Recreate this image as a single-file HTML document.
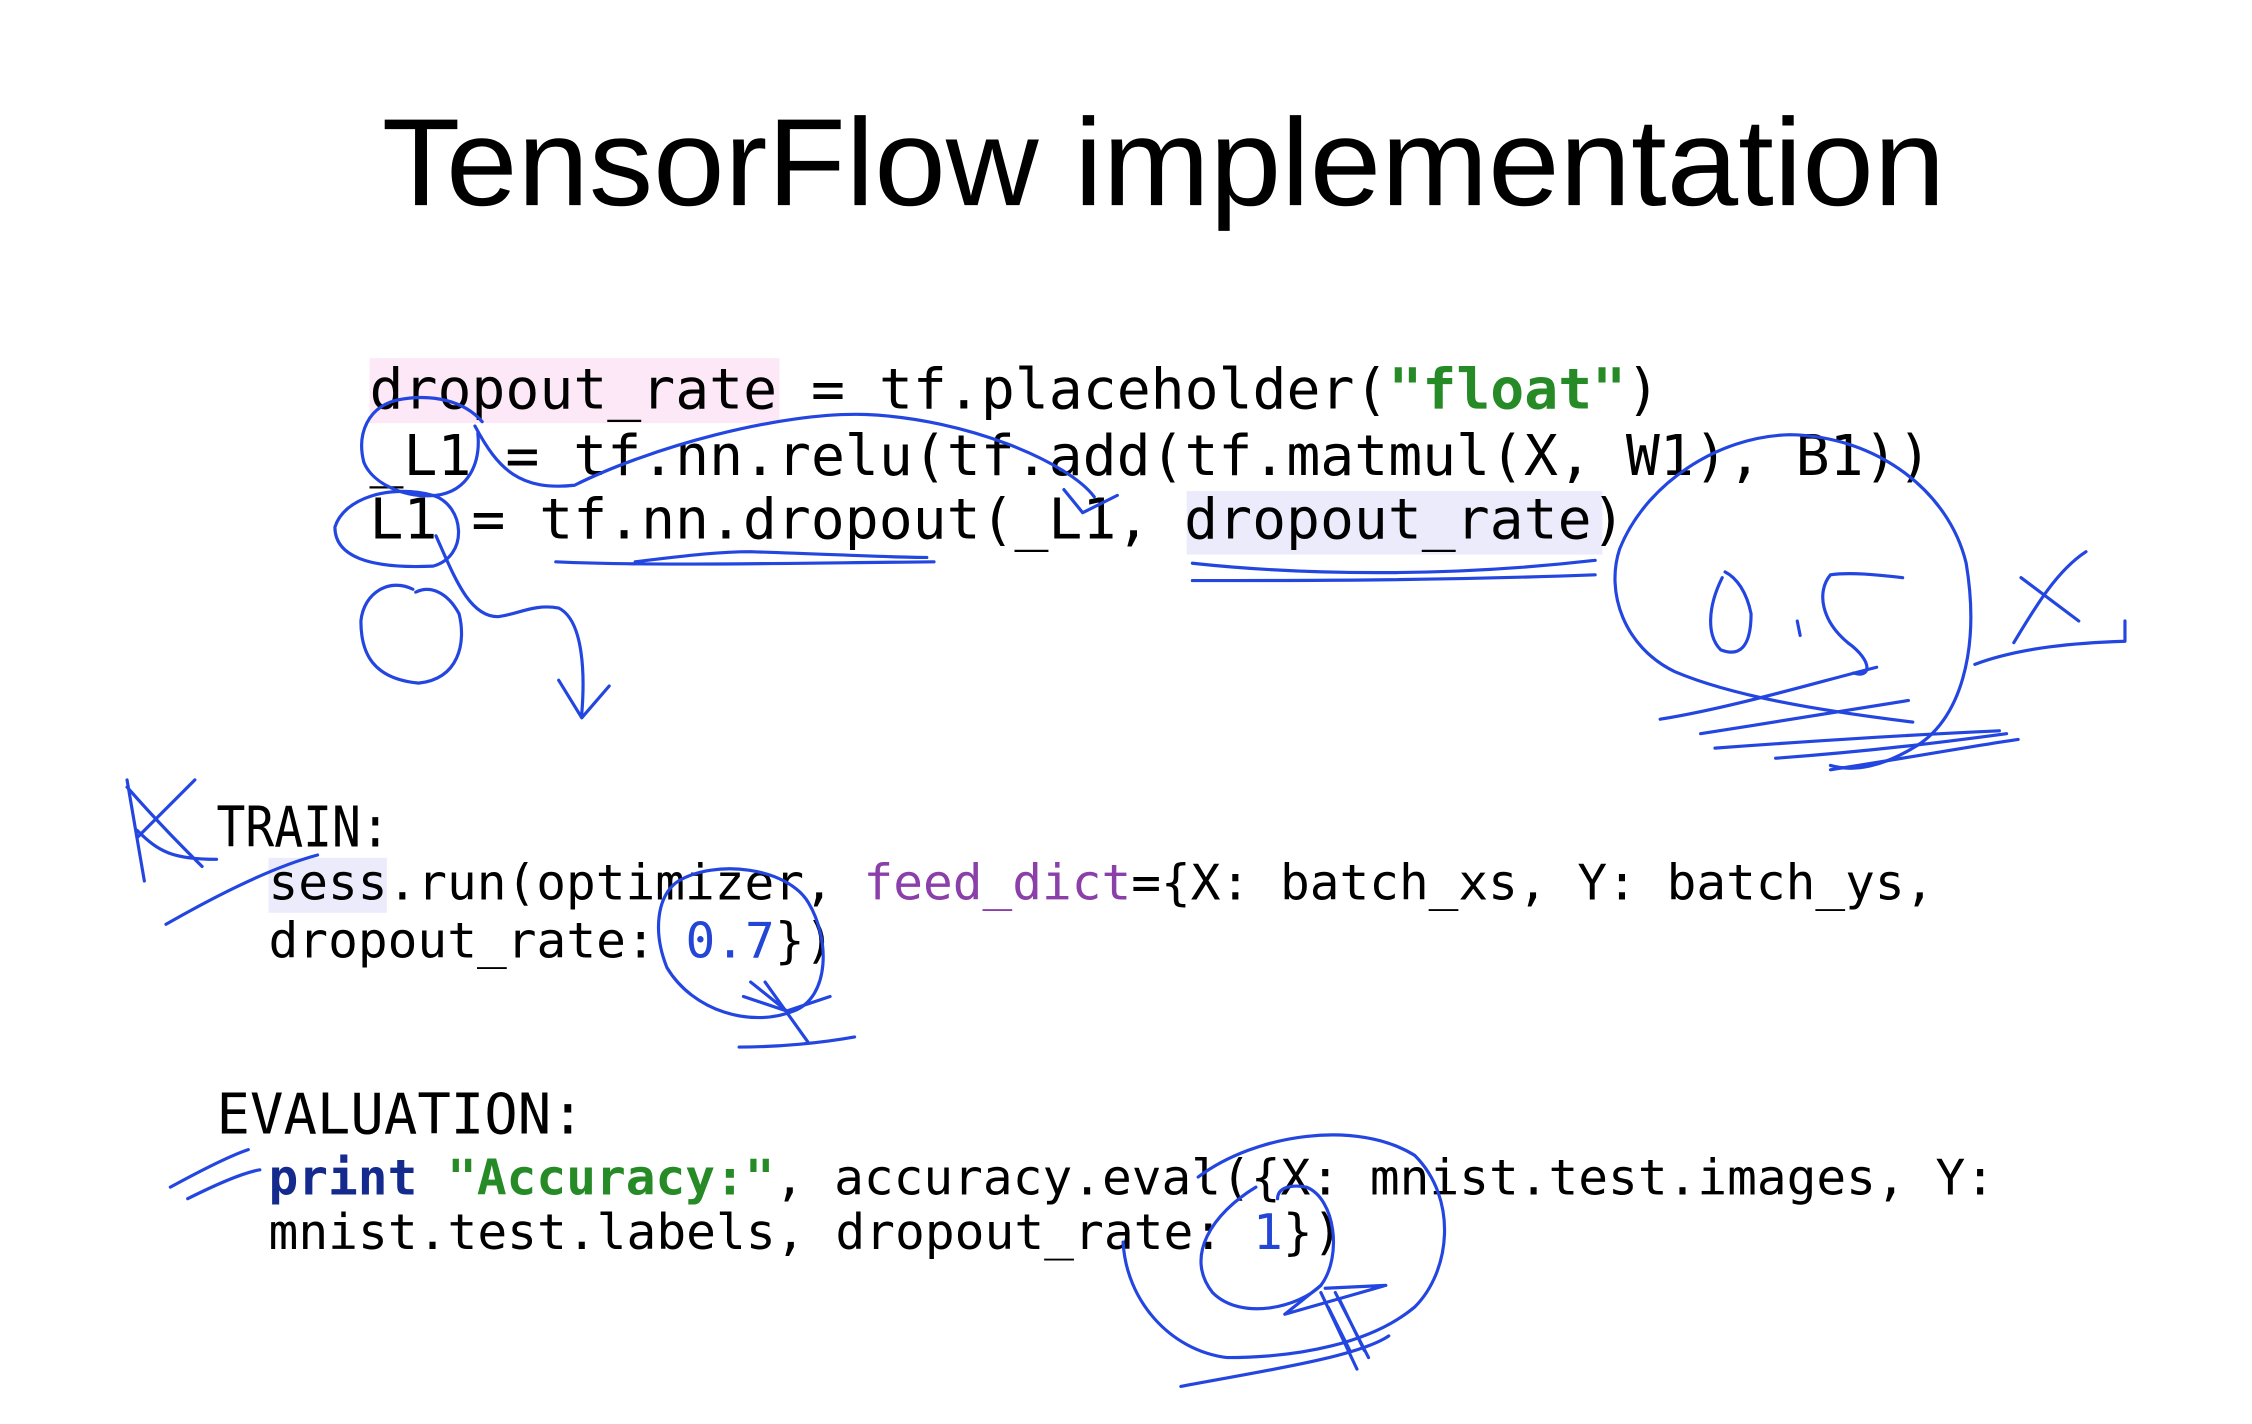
<!DOCTYPE html>
<html><head><meta charset="utf-8"><style>
html,body{margin:0;padding:0;background:#fff;width:2252px;height:1424px;overflow:hidden}
svg{display:block}
.c1{font-family:"DejaVu Sans Mono","Liberation Mono",monospace;font-size:39px;fill:#000}
.c2{font-family:"DejaVu Sans Mono","Liberation Mono",monospace;font-size:34.2px;fill:#000}
.p{fill:none;stroke:#2446e0;stroke-width:2.2;stroke-linecap:round;stroke-linejoin:round}
</style></head><body>
<svg width="2252" height="1424" viewBox="0 0 1560 986" preserveAspectRatio="none" xmlns="http://www.w3.org/2000/svg">
<text x="806" y="142" text-anchor="middle" font-family="Liberation Sans, sans-serif" font-size="86" textLength="1083" lengthAdjust="spacingAndGlyphs">TensorFlow implementation</text>

<rect x="256" y="248" width="284" height="45" fill="#fce8f6"/>
<rect x="822" y="340" width="288" height="44" fill="#ebebfb"/>
<rect x="186" y="594" width="82" height="38" fill="#ebebfb"/>

<text class="c1" x="256" y="283" textLength="894" lengthAdjust="spacingAndGlyphs">dropout_rate = tf.placeholder(<tspan fill="#268a26" font-weight="bold">"float"</tspan>)</text>
<text class="c1" x="256" y="329" textLength="1082" lengthAdjust="spacingAndGlyphs">_L1 = tf.nn.relu(tf.add(tf.matmul(X, W1), B1))</text>
<text class="c1" x="256" y="373" textLength="870" lengthAdjust="spacingAndGlyphs">L1 = tf.nn.dropout(_L1, dropout_rate)</text>

<text class="c1" x="150" y="586" textLength="120" lengthAdjust="spacingAndGlyphs">TRAIN:</text>
<text class="c2" x="186" y="623" textLength="1154" lengthAdjust="spacingAndGlyphs">sess.run(optimizer, <tspan fill="#8b3fa8">feed_dict</tspan>={X: batch_xs, Y: batch_ys,</text>
<text class="c2" x="186" y="663" textLength="392" lengthAdjust="spacingAndGlyphs">dropout_rate: <tspan fill="#2346d6">0.7</tspan>})</text>

<text class="c1" x="150" y="785" textLength="255" lengthAdjust="spacingAndGlyphs">EVALUATION:</text>
<text class="c2" x="186" y="827" textLength="1196" lengthAdjust="spacingAndGlyphs"><tspan fill="#142a8c" font-weight="bold">print</tspan> <tspan fill="#268a26" font-weight="bold">"Accuracy:"</tspan>, accuracy.eval({X: mnist.test.images, Y:</text>
<text class="c2" x="186" y="865" textLength="744" lengthAdjust="spacingAndGlyphs">mnist.test.labels, dropout_rate: <tspan fill="#2346d6">1</tspan>})</text>

<!-- annotations -->
<path class="p" d="M334 292 C322 278 300 272 275 277 C255 282 247 300 252 320 C258 335 280 345 302 343 C325 340 333 320 331 300"/>
<path class="p" d="M329 295 C345 325 360 340 398 336 C450 310 540 285 600 287 C670 290 740 320 758 344 M737 339 L750 355 L774 343"/>
<path class="p" d="M300 343 C270 335 238 345 232 365 C232 385 255 394 300 392 C325 385 322 350 300 343"/>
<path class="p" d="M302 371 C315 400 325 427 345 427 C360 425 370 418 387 421 C405 430 405 470 403 494 M387 471 L403 497 L422 475"/>
<path class="p" d="M286 408 C270 400 252 410 250 430 C250 452 258 470 290 473 C318 470 323 445 318 425 C310 410 298 405 288 410"/>
<path class="p" d="M385 389 C450 392 540 390 647 389 M440 389 C480 384 500 382 520 382 C580 384 620 386 642 386"/>
<path class="p" d="M826 390 C900 398 1000 400 1105 388 M826 402 C900 402 1000 402 1105 398"/>
<path class="p" d="M1325 500 C1260 492 1200 482 1160 465 C1125 448 1112 410 1122 380 C1140 335 1190 302 1240 301 C1300 302 1350 340 1362 390 C1372 450 1358 500 1325 518 C1305 530 1285 535 1268 530"/>
<path class="p" d="M1193 400 C1183 420 1182 440 1192 450 C1205 455 1213 448 1213 425 C1210 410 1203 400 1195 396"/>
<path class="p" d="M1245 430 L1247 440"/>
<path class="p" d="M1318 400 C1300 398 1282 396 1268 398 C1258 410 1262 430 1280 445 C1298 458 1296 470 1284 466"/>
<path class="p" d="M1150 498 C1200 490 1260 472 1300 462 M1178 508 C1230 500 1290 490 1322 485 M1188 518 C1270 512 1340 508 1385 506 M1230 525 C1300 520 1360 512 1390 508 M1268 533 C1320 525 1370 516 1398 512"/>
<path class="p" d="M1400 400 L1440 430 M1445 382 C1425 395 1410 420 1395 445 M1368 460 C1400 448 1440 445 1472 444 L1472 430"/>
<path class="p" d="M88 540 L100 610 M88 545 C110 570 125 585 140 600 M95 580 L135 540 M95 575 C110 590 120 595 150 595 M115 640 C150 620 190 600 220 592"/>
<path class="p" d="M470 610 C495 595 545 600 560 625 C575 650 575 690 550 700 C520 712 480 700 462 670 C452 645 455 620 470 610"/>
<path class="p" d="M520 680 L545 700 L515 690 M530 680 L560 722 M545 700 L575 690 M512 725 C540 725 570 722 592 718"/>
<path class="p" d="M118 822 C140 810 160 800 172 796 M130 830 C150 820 168 812 180 810"/>
<path class="p" d="M870 822 C840 840 820 870 840 895 C860 915 900 905 915 890 C930 870 925 830 905 822 C895 820 885 822 885 830"/>
<path class="p" d="M830 815 C870 785 940 775 980 800 C1010 830 1005 880 980 905 C950 930 900 940 850 940 C810 935 780 900 778 860 M818 960 C870 950 940 940 962 925"/>
<path class="p" d="M915 890 L890 910 L960 890 L918 892 M915 895 L940 948 M925 895 L948 940 M920 905 L935 935 M928 900 L945 935" stroke-width="4"/>
</svg>
</body></html>
